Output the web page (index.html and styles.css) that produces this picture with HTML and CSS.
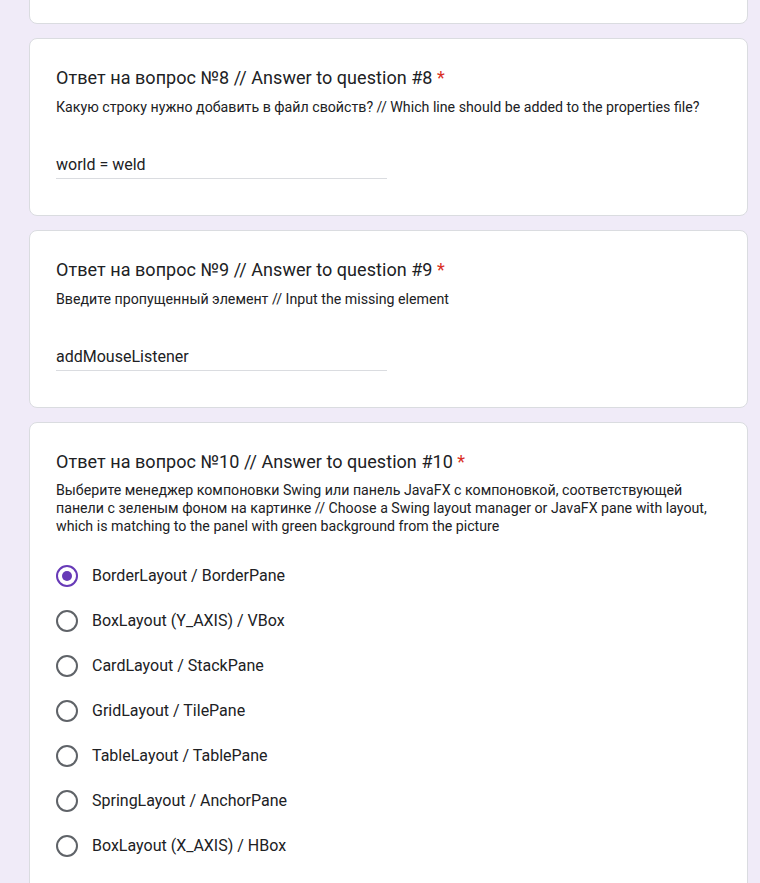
FILE: index.html
```html
<!DOCTYPE html>
<html lang="ru">
<head>
<meta charset="utf-8">
<title>Form</title>
<link rel="stylesheet" href="styles.css">
</head>
<body>
<div class="page">
  <div class="card card-top"></div>

  <div class="card">
    <div class="q-title">Ответ на вопрос №8 // Answer to question #8 <span class="req">*</span></div>
    <div class="q-desc">Какую строку нужно добавить в файл свойств? // Which line should be added to the properties file?</div>
    <div class="answer">world = weld</div>
  </div>

  <div class="card">
    <div class="q-title">Ответ на вопрос №9 // Answer to question #9 <span class="req">*</span></div>
    <div class="q-desc">Введите пропущенный элемент // Input the missing element</div>
    <div class="answer">addMouseListener</div>
  </div>

  <div class="card card-last">
    <div class="q-title">Ответ на вопрос №10 // Answer to question #10 <span class="req">*</span></div>
    <div class="q-desc">Выберите менеджер компоновки Swing или панель JavaFX с компоновкой, соответствующей панели с зеленым фоном на картинке // Choose a Swing layout manager or JavaFX pane with layout, which is matching to the panel with green background from the picture</div>
    <div class="options">
      <div class="option"><span class="radio checked"></span><span class="label">BorderLayout / BorderPane</span></div>
      <div class="option"><span class="radio"></span><span class="label">BoxLayout (Y_AXIS) / VBox</span></div>
      <div class="option"><span class="radio"></span><span class="label">CardLayout / StackPane</span></div>
      <div class="option"><span class="radio"></span><span class="label">GridLayout / TilePane</span></div>
      <div class="option"><span class="radio"></span><span class="label">TableLayout / TablePane</span></div>
      <div class="option"><span class="radio"></span><span class="label">SpringLayout / AnchorPane</span></div>
      <div class="option"><span class="radio"></span><span class="label">BoxLayout (X_AXIS) / HBox</span></div>
    </div>
  </div>
</div>
</body>
</html>
```

FILE: styles.css
```css
html, body {
  margin: 0;
  padding: 0;
  background: #f0ebf8;
  height: 100%;
  overflow: hidden;
}
body {
  font-family: Roboto, "Noto Sans", Arial, sans-serif;
  color: #202124;
}
.page {
  width: 719px;
  margin-left: 29px;
  margin-top: -31px;
  display: flex;
  flex-direction: column;
  gap: 14px;
}
.card {
  background: #fff;
  border: 1px solid #dadce0;
  border-radius: 8px;
  padding: 27px 26px 36px 26px;
  box-sizing: border-box;
}
.card-top {
  height: 55px;
  padding: 0;
}
.card-last {
  padding-top: 27px;
  padding-bottom: 60px;
}
.q-title {
  font-size: 18px;
  line-height: 24px;
  letter-spacing: 0.05px;
}
.req {
  color: #d93025;
}
.q-desc {
  margin-top: 8px;
  font-size: 14.2px;
  line-height: 18px;
}
.card-last .q-desc {
  margin-top: 7px;
}
.answer {
  margin-top: 37px;
  width: 331px;
  font-size: 16px;
  line-height: 24px;
  padding-bottom: 1px;
  border-bottom: 1px solid #dadce0;
}
.options {
  margin-top: 18px;
  display: flex;
  flex-direction: column;
}
.option {
  height: 45px;
  display: flex;
  align-items: center;
}
.radio {
  width: 22px;
  height: 22px;
  box-sizing: border-box;
  border: 2px solid #5f6368;
  border-radius: 50%;
  flex: none;
  display: flex;
  align-items: center;
  justify-content: center;
}
.radio.checked {
  border-color: #673ab7;
}
.radio.checked::after {
  content: "";
  width: 10px;
  height: 10px;
  border-radius: 50%;
  background: #673ab7;
}
.label {
  margin-left: 14px;
  font-size: 16px;
  line-height: 24px;
}
```
